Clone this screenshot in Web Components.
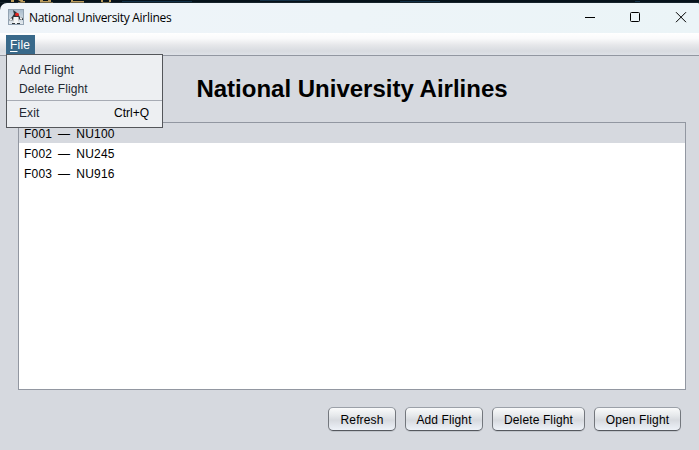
<!DOCTYPE html>
<html lang="en"><head><meta charset="utf-8"><title>National University Airlines</title>
<style>html,body{margin:0;width:699px;height:450px;overflow:hidden;background:#07131b}body{font:12px "Liberation Sans",Arial,sans-serif;color:#000}</style></head>
<body>
<air-desktop></air-desktop>
<script>
const define = (name, html) => customElements.define(name, class extends HTMLElement {
  constructor() {
    super();
    this.attachShadow({ mode: 'open' }).innerHTML = html;
  }
});

define('title-bar', `<style>
:host{display:flex;align-items:center;height:30px;padding:0 0 0 8px;box-sizing:border-box;background:linear-gradient(90deg,#eff4f9,#ebf4f7);border-radius:7px 1px 0 0;font-family:"Open Sans","Noto Sans",sans-serif}
.name{flex:1;margin-left:5px;white-space:nowrap;line-height:30px;letter-spacing:-.3px}
svg{display:block;flex:none;margin-top:-2px}
</style>
<svg width="16" height="16" viewBox="0 0 16 16"><defs><linearGradient id="g" x2="0" y2="1"><stop stop-color="#a9bccd"/><stop offset="1" stop-color="#e3e9ee"/></linearGradient></defs><rect width="16" height="16" fill="#93a3b2"/><rect x="1" y="1" width="14" height="14" fill="url(#g)"/><path d="M5 1l3 2 2 2 2 3 3 1v2l-3 0-1-1v4H5v-3l-2 1-2-1 3-3 2-3z" fill="#30363b"/><path d="M5.500 8l5 0 .5 6H5z" fill="#f5f6f6"/><path d="M1.500 10l2-1 1 2-2 1zM12 8l2.500 1-1 2-1.500-1z" fill="#eef0f1"/><path d="M4 14.500h3M9 14.500h3" stroke="#30363b"/><ellipse cx="9" cy="5.500" rx="2" ry="1.700" fill="#e52420"/></svg>
<span class="name"><slot></slot></span>
<svg width="116" height="16" viewBox="0 0 116 16" fill="none" stroke="#000"><path d="M2 8.500h10"/><rect x="47.500" y="3.500" width="9" height="9" rx="1"/><path d="M93 3.200l10 10M103 3.200l-10 10"/></svg>`);

define('menu-bar', `<style>
:host{display:flex;height:23px;box-sizing:border-box;padding:2px 0 0 6px;border-bottom:1px solid #9297a1;background:linear-gradient(#fff 0,#fafafb 25%,#e6e7ea 55%,#d8dbe0 82%,#dee1e7)}
.top{width:29px;height:19px;box-sizing:border-box;padding-left:4px;background:#39698a;color:#fff;line-height:20px;letter-spacing:.2px}
u{text-underline-offset:2px;text-decoration-thickness:1px}
</style><div class="top"><u>F</u>ile</div>`);

define('menu-item', `<style>
:host{display:flex;justify-content:space-between;height:19px;line-height:19px;padding:0 13px 0 12px;color:#232931;letter-spacing:.1px;white-space:nowrap}
.key{color:#000;letter-spacing:0}
</style><span><slot></slot></span><span class="key"><slot name="key"></slot></span>`);

define('drop-menu', `<style>
:host{position:absolute;left:6px;top:54px;width:157px;height:74px;box-sizing:border-box;border:1px solid #54565a;background:#edeff2;padding-top:6px}
.line{height:1px;background:#a7abb4;margin:1px 0 3px}
</style><menu-item>Add Flight</menu-item><menu-item>Delete Flight</menu-item><div class="line"></div><menu-item>Exit<span slot="key">Ctrl+Q</span></menu-item>`);

define('flight-row', `<style>
:host{display:block;height:20px;line-height:22px;padding-left:5px;white-space:pre;letter-spacing:.2px;word-spacing:-.55px}
:host([selected]){background:#d6d9df}
</style><slot></slot>`);

define('flight-list', `<style>
:host{display:block;height:268px;box-sizing:border-box;border:1px solid #9297a1;background:#fff}
</style><slot></slot>`);

define('push-button', `<style>
:host{display:block;height:24px;box-sizing:border-box;border:1px solid;border-color:#9ba0a8 #73777d #55585e;border-radius:5px;background:linear-gradient(#fafbfb,#e5e8eb 35%,#d7dadf 55%,#e6eaf0 85%,#eef2f8);text-align:center;line-height:24px;box-shadow:0 1px 0 #c0c4ca;white-space:nowrap;letter-spacing:.12px}
</style><slot></slot>`);

define('air-desktop', `<style>
:host{position:relative;display:flex;flex-direction:column;height:450px}
.wall{height:3px;flex:none;display:block;margin-bottom:-7px}
title-bar{margin-top:7px}
main{height:394px;flex:none;background:#d6d9df;padding:0 13px 0 18px;box-sizing:border-box}
h1{margin:0;height:66px;line-height:66px;text-align:center;font-size:24px;white-space:nowrap}
flight-list{width:668px}
.actions{display:flex;justify-content:flex-end;gap:9px;padding:17px 5px 0 0}
</style>
<svg class="wall" width="699" height="3"><rect width="699" height="3" fill="#06121a"/><path d="M11 0h3v2h-3M18 0h5v1h2v2h-7v-1h3zM40 0h3v1h5v-1h3v2h2v1h-13M71 0h2v1h11v2H70v-1h1M101 0h2v2h6v-2h2v2l-2 1h-6l-2-1" fill="#b99a5b"/><path d="M122 1h70v1h-70M260 0h50v1h-50M400 1h40v1h-40M635 1h5v1h-5" fill="#133147"/><path d="M0 2.500h699" stroke="#26343c" opacity=".5"/></svg>
<title-bar>National University Airlines</title-bar><menu-bar></menu-bar>
<main><h1>National University Airlines</h1>
<flight-list><flight-row selected>F001  —  NU100</flight-row><flight-row>F002  —  NU245</flight-row><flight-row>F003  —  NU916</flight-row></flight-list>
<div class="actions"><push-button style="width:68px">Refresh</push-button><push-button style="width:78px">Add Flight</push-button><push-button style="width:93px">Delete Flight</push-button><push-button style="width:87px">Open Flight</push-button></div></main>
<drop-menu></drop-menu>`);
</script></body></html>
